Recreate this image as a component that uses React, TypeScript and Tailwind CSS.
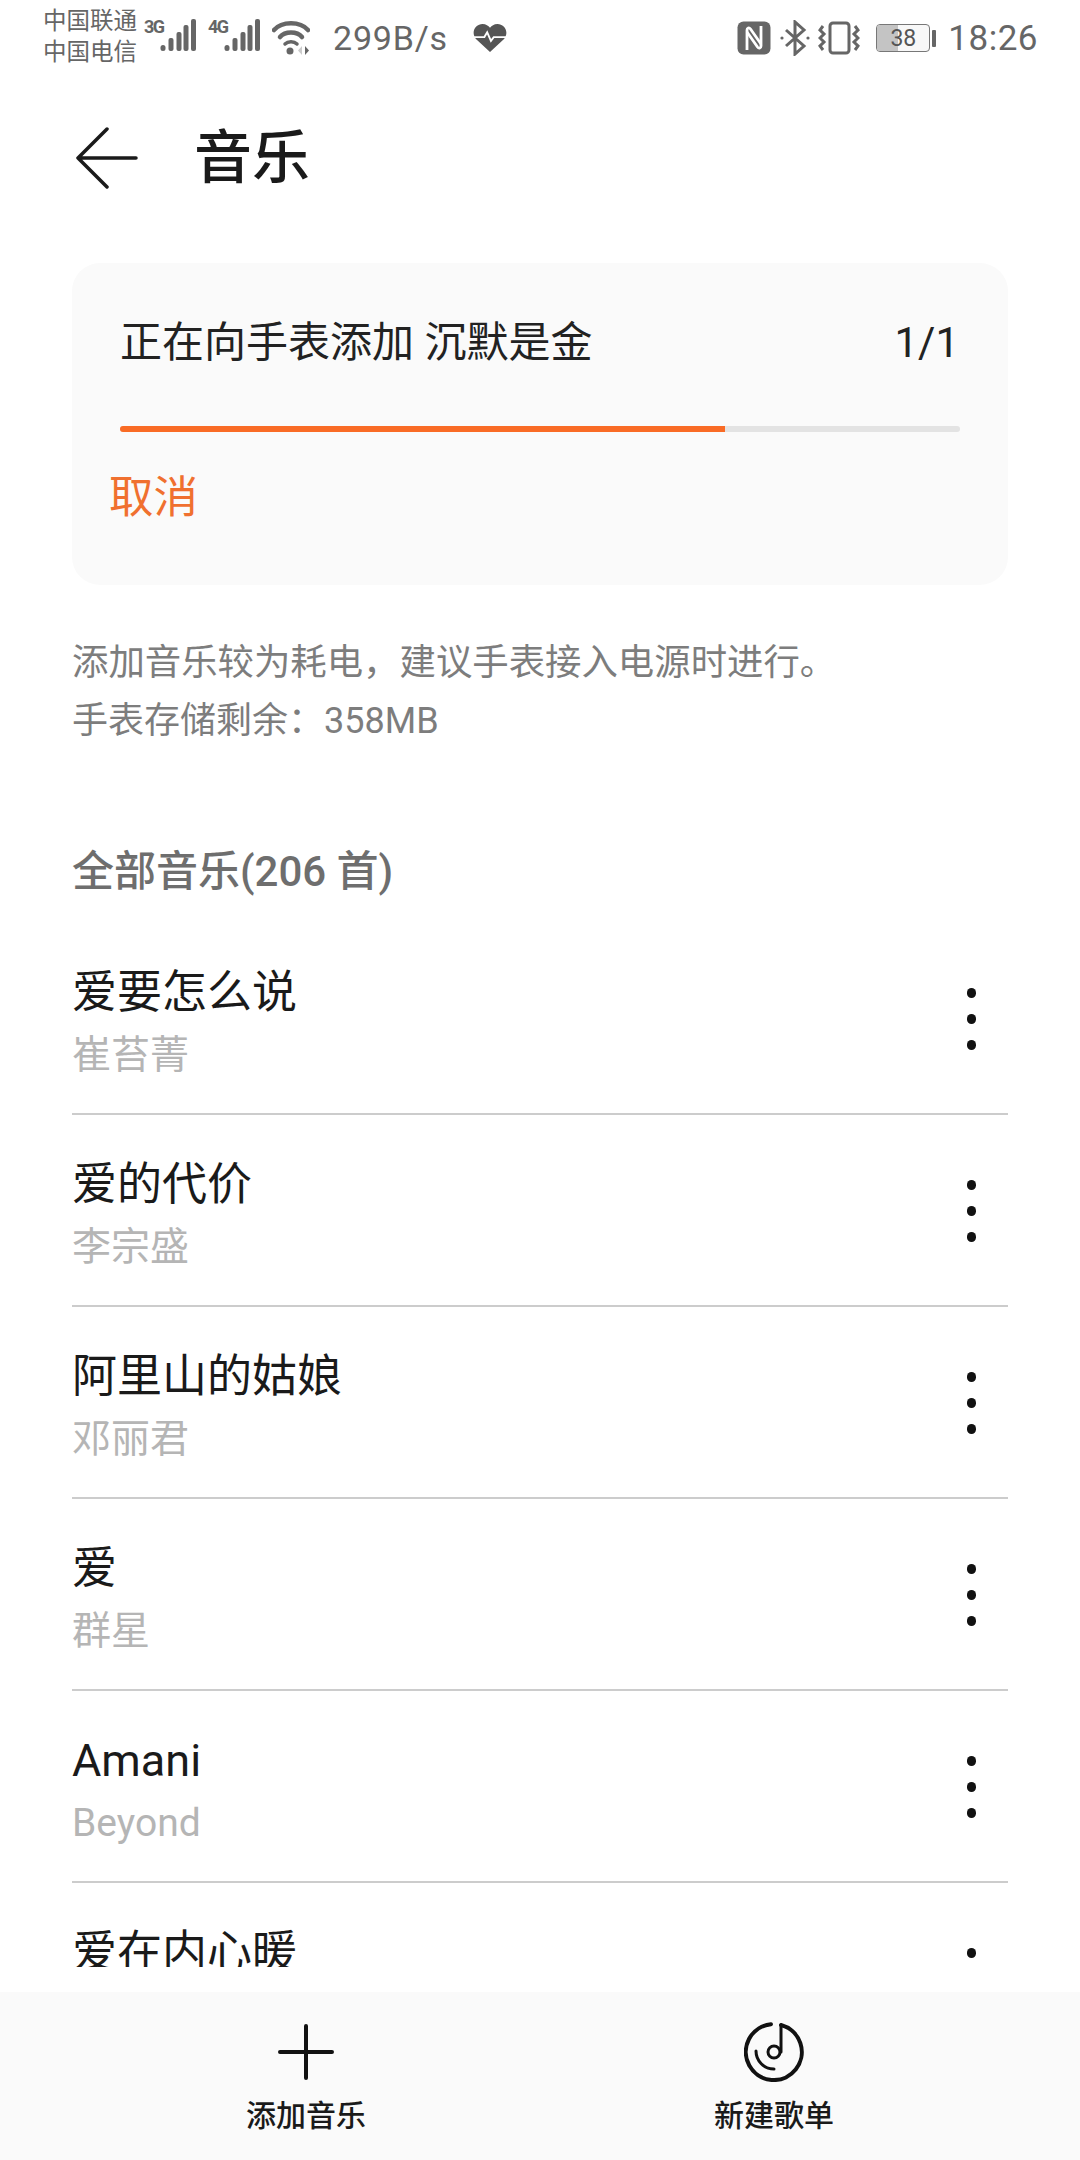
const sans = "font-['Roboto','Noto_Sans_CJK_SC',sans-serif]";

const songs = [
  ["爱要怎么说", "崔苔菁"],
  ["爱的代价", "李宗盛"],
  ["阿里山的姑娘", "邓丽君"],
  ["爱", "群星"],
  ["Amani", "Beyond"],
];

function Dots() {
  return (
    <div className="flex flex-col gap-[16px] mr-[22px]">
      <div className="w-[9px] h-[10px] rounded-full bg-[#111]" />
      <div className="w-[9px] h-[10px] rounded-full bg-[#111]" />
      <div className="w-[9px] h-[10px] rounded-full bg-[#111]" />
    </div>
  );
}

function Row({ title, sub }: { title: string; sub: string }) {
  return (
    <div className="h-[192px] flex items-start justify-between border-b-2 border-[#cccccc]">
      <div className="flex flex-col">
        <div className="text-[45px] leading-[60px] mt-[40px] text-[#1a1a1a]">{title}</div>
        <div className="text-[39px] leading-[50px] mt-[7px] text-[#b5b5b5]">{sub}</div>
      </div>
      <div className="mt-[65px] mr-[10px]"><Dots /></div>
    </div>
  );
}

function Signal({ label }: { label: string }) {
  return (
    <div className="relative w-[52px] h-[40px]">
      <span className="absolute left-0 top-[0px] text-[18px] leading-[18px] font-bold text-[#666] tracking-[-1.5px]">{label}</span>
      <svg className="absolute left-0 top-0" width="52" height="40" viewBox="0 0 52 40" fill="#666">
        <rect x="16.5" y="27" width="5" height="6" rx="2.5" />
        <rect x="24.5" y="20" width="5" height="13" rx="2" />
        <rect x="32.5" y="14" width="5" height="19" rx="2" />
        <rect x="39.5" y="7" width="5" height="26" rx="2" />
        <rect x="47" y="1" width="5" height="32" rx="2" />
      </svg>
    </div>
  );
}

function StatusBar() {
  return (
    <div className="h-[76px] flex items-center text-[#666] pl-[43px] pr-[42px]">
      <div className="flex flex-col text-[23.5px] leading-[31px] mt-[-2px]">
        <span>中国联通</span>
        <span>中国电信</span>
      </div>
      <div className="flex ml-[7px] gap-[12px]">
        <Signal label="3G" />
        <Signal label="4G" />
      </div>
      <svg className="ml-[12px]" width="38" height="36" viewBox="0 0 38 36" fill="none" stroke="#666" strokeLinecap="round">
        <path d="M2 10C10 1 28 1 36 10" strokeWidth="4.5" />
        <path d="M8 17C13 11 25 11 30 17" strokeWidth="4.5" />
        <path d="M13 24C16 21 22 21 25 24" strokeWidth="3.5" />
        <circle cx="18" cy="31" r="3.5" fill="#666" stroke="none" />
        <path d="M30 26v9l-4-4.5Z" fill="#ccc" stroke="none" />
        <path d="M33 26v9l4-4.5Z" fill="#666" stroke="none" />
      </svg>
      <span className="text-[34px] ml-[23px] leading-none tracking-[0.8px]">299B/s</span>
      <svg className="ml-[25px]" width="34" height="30" viewBox="0 0 36 32">
        <path d="M18 31 3 17C-3 9 3 1 10 1c4 0 6 2 8 4 2-2 4-4 8-4 7 0 13 8 7 16Z" fill="#555" />
        <path d="M1 15h11l3-5 4 9 3-4h13" fill="none" stroke="#fff" strokeWidth="2" />
      </svg>
      <div className="flex-1" />
      <svg width="34" height="34" viewBox="0 0 34 34" fill="none">
        <rect x="0.5" y="0.5" width="33" height="33" rx="6" fill="#666" />
        <path d="M10 29V9c0-2 2-3 3.5-1L24 23" stroke="#fff" strokeWidth="2.8" />
        <path d="M24 5v20c0 2-2 3-3.5 1L10 11" stroke="#fff" strokeWidth="2.8" />
      </svg>
      <svg className="ml-[9px]" width="30" height="36" viewBox="0 0 30 36" fill="none" stroke="#666" strokeWidth="3">
        <path d="M6 10l18 16-9 8V2l9 8L6 26" />
        <circle cx="2" cy="18" r="1.6" fill="#666" stroke="none" />
        <circle cx="28" cy="18" r="1.6" fill="#666" stroke="none" />
      </svg>
      <svg className="ml-[8px]" width="42" height="34" viewBox="0 0 42 34" fill="none" stroke="#666" strokeWidth="3">
        <rect x="12" y="2" width="19" height="30" rx="3" />
        <path d="M5 5 2 9l4 4-4 4 4 4-4 4 3 4M37 5l3 4-4 4 4 4-4 4 4 4-3 4" />
      </svg>
      <div className="ml-[16px] relative w-[54px] h-[28px] border-[1.5px] border-[#777] rounded-[4px] bg-[#f8f8f8] overflow-hidden flex items-center justify-center">
        <div className="absolute left-0 top-0 bottom-0 w-[21px] bg-[#c4c4c4]" />
        <span className="relative text-[23px] leading-none text-[#555]">38</span>
      </div>
      <div className="ml-[2px] w-[4px] h-[17px] bg-[#666] rounded-[1px]" />
      <span className="text-[35px] leading-none ml-[12px] tracking-[0.5px]">18:26</span>
    </div>
  );
}

function BottomAction({ label, children }: { label: string; children: React.ReactNode }) {
  return (
    <div className="flex flex-col items-center w-[140px]">
      <div className="h-[60px] flex items-center justify-center">{children}</div>
      <span className="text-[30px] leading-[34px] font-medium text-[#1a1a1a] mt-[17px]">{label}</span>
    </div>
  );
}

export default function App() {
  return (
    <div className={`relative w-[1080px] h-[2160px] bg-white overflow-hidden ${sans}`}>
      <StatusBar />
      <div className="h-[164px] flex items-center pl-[76px]">
        <svg width="62" height="62" viewBox="0 0 62 62" fill="none" stroke="#1a1a1a" strokeWidth="3.5" strokeLinecap="round" strokeLinejoin="round">
          <path d="M60 31H2M31 2 2 31l29 29" />
        </svg>
        <span className="ml-[56px] text-[58px] leading-none font-medium text-[#1a1a1a]">音乐</span>
      </div>
      <div className="mx-[72px] mt-[23px] h-[322px] rounded-[28px] bg-[#fafafa] flex flex-col">
        <div className="flex justify-between items-center pl-[48px] pr-[49px] mt-[56px]">
          <span className="text-[42px] leading-[48px] text-[#222]">正在向手表添加 沉默是金</span>
          <span className="text-[42px] leading-[48px] text-[#222]">1/1</span>
        </div>
        <div className="mx-[48px] mt-[59px] h-[6px] rounded-full bg-[#e3e3e3] overflow-hidden">
          <div className="w-[72%] h-full bg-[#f96b25]" />
        </div>
        <span className="ml-[37px] mt-[41px] text-[44.5px] leading-[50px] text-[#f0702f]">取消</span>
      </div>
      <div className="mx-[72px] mt-[48px] leading-[59px] text-[#7d7d7d]">
        <div className="text-[36.4px]">添加音乐较为耗电，建议手表接入电源时进行。</div>
        <div className="text-[36px]">手表存储剩余：358MB</div>
      </div>
      <div className="mx-[72px] mt-[93px] text-[42px] leading-[56px] font-medium text-[#6e6e6e]">全部音乐(206 首)</div>
      <div className="mx-[72px] mt-[23px] h-[1044px] overflow-hidden">
        {songs.map(([t, s]) => (
          <Row key={t} title={t} sub={s} />
        ))}
        <Row title="爱在内心暖" sub="" />
      </div>
      <div className="absolute left-0 right-0 bottom-0 h-[168px] bg-[#fafafa] flex justify-between pl-[236px] pr-[236px] pt-[30px]">
        <BottomAction label="添加音乐">
          <svg width="56" height="56" viewBox="0 0 56 56" stroke="#111" strokeWidth="4" strokeLinecap="round">
            <path d="M28 2v52M2 28h52" />
          </svg>
        </BottomAction>
        <BottomAction label="新建歌单">
          <svg width="60" height="60" viewBox="0 0 60 60" fill="none" stroke="#111" strokeWidth="4" strokeLinecap="round">
            <path d="M37 3A28 28 0 1 1 27 2.2" />
            <path d="M37 3V30" strokeWidth="3" />
            <circle cx="30" cy="30" r="6" strokeWidth="3" />
            <path d="M12 29A18 18 0 0 0 30 47" strokeWidth="3" />
          </svg>
        </BottomAction>
      </div>
    </div>
  );
}
